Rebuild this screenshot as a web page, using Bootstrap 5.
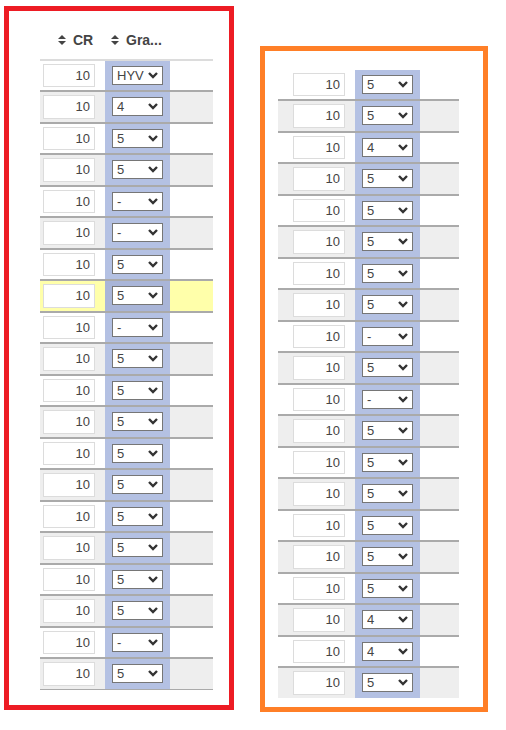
<!DOCTYPE html>
<html lang="en">
<head>
<meta charset="utf-8">
<meta name="viewport" content="width=device-width, initial-scale=1">
<title>Grades</title>
<link href="https://cdn.jsdelivr.net/npm/bootstrap@5.3.0/dist/css/bootstrap.min.css" rel="stylesheet">
<style>
  body { font-family: "Liberation Sans", Arial, sans-serif; font-size: 14px; color: #444; background: #fff; }
  .page { padding: 6px 18px 18px 4px; gap: 26px; }
  .panel { flex: 1 1 230px; min-width: 200px; border: 5px solid #ed1c24; }
  .panel-current { padding: 10px 16px 15px 31px; }
  .panel-previous { flex-basis: 228px; padding: 19px 24px 9px 13px; margin-top: 40px; border-color: #ff7f27; }
  .grades { width: 100%; table-layout: fixed; border-collapse: separate; border-spacing: 0; }
  .grades th { height: 40px; padding: 0; border-bottom: 2px solid #dcdcdc; font-weight: bold; white-space: nowrap; }
  .grades td { height: 31px; padding: 3px 0 0; vertical-align: top; border-bottom: 2px solid #aaa; }
  .grades tbody tr:nth-child(even) td { height: 32px; background: #eee; }
  .grades tbody tr:last-child td { height: 31px; border-bottom-width: 1px; }
  .panel-previous .grades tbody tr:last-child td { height: 30px; border-bottom: 0; }
  .grades tbody tr td.grade-cell { padding: 5px 0 0 7px; background: #b4c1e3; }
  .grades tbody tr.picked td { background: #ffa; }
  .grades tbody tr.picked td.grade-cell { background: #a9b5d8; }
  .grades td.credit-cell { padding-right: 10px; }
  .col-credit { width: 65px; }
  .panel-previous .col-credit { width: 77px; }
  .col-grade { width: 65px; }
  .credit { display: block; width: 52px; height: 23px; margin-left: auto; padding: 0 4px; border: 1px solid #dcdcdc; border-radius: 0; background: #fff; color: #444; font-size: 13px; line-height: 20px; text-align: right; }
  tr:nth-child(even) .credit { height: 24px; padding-bottom: 2px; }
  .grade { display: block; appearance: none; width: 51px; height: 19px; padding: 0 0 0 4px; border: 1px solid #767676; border-radius: 0; background: #fff url("data:image/svg+xml,%3Csvg xmlns='http://www.w3.org/2000/svg' width='10' height='7' viewBox='0 0 10 7'%3E%3Cpath d='M1 1l4 4L9 1' fill='none' stroke='%23333' stroke-width='2.4'/%3E%3C/svg%3E") no-repeat right 4px center; color: #444; font-size: 13px; line-height: 17px; }
  .sorter { display: inline-flex; align-items: center; gap: 7px; padding: 0; border: 0; background: none; color: #444; font-weight: bold; line-height: 20px; }
  .grades .th-credit { padding-left: 18px; }
  .grades .th-grade { padding-left: 6px; }
</style>
</head>
<body>
<main class="page d-flex align-items-start">
  <section class="panel panel-current" aria-label="Current grades">
    <table class="grades">
      <colgroup><col class="col-credit"><col class="col-grade"><col></colgroup>
      <thead>
        <tr>
          <th class="th-credit" scope="col"><button type="button" class="sorter"><svg width="8" height="10" viewBox="0 0 8 10" fill="currentColor" aria-hidden="true"><path d="M4 0 8 4H0zM0 6h8L4 10z"/></svg>CR</button></th>
          <th class="th-grade" scope="col"><button type="button" class="sorter"><svg width="8" height="10" viewBox="0 0 8 10" fill="currentColor" aria-hidden="true"><path d="M4 0 8 4H0zM0 6h8L4 10z"/></svg>Gra...</button></th>
          <th></th>
        </tr>
      </thead>
      <tbody data-grades="HYV 4 5 5 - - 5 5 - 5 5 5 5 5 5 5 5 5 - 5" data-picked="8"></tbody>
    </table>
  </section>
  <section class="panel panel-previous" aria-label="Other grades">
    <table class="grades">
      <colgroup><col class="col-credit"><col class="col-grade"><col></colgroup>
      <tbody data-grades="5 5 4 5 5 5 5 5 - 5 - 5 5 5 5 5 5 4 4 5"></tbody>
    </table>
  </section>
</main>
<script src="https://cdn.jsdelivr.net/npm/bootstrap@5.3.0/dist/js/bootstrap.bundle.min.js"></script>
<script>
  const choices = ['-', '1', '2', '3', '4', '5', 'HYV'];
  document.querySelectorAll('tbody[data-grades]').forEach(body => {
    body.innerHTML = body.dataset.grades.split(' ').map((grade, i) => `
      <tr class="${i + 1 === Number(body.dataset.picked) ? 'picked' : ''}">
        <td class="credit-cell"><input class="credit" type="text" value="10" aria-label="Credits, row ${i + 1}"></td>
        <td class="grade-cell"><select class="grade" aria-label="Grade, row ${i + 1}">${choices.map(c => `<option${c === grade ? ' selected' : ''}>${c}</option>`).join('')}</select></td>
        <td></td>
      </tr>`).join('');
  });
</script>
</body>
</html>
